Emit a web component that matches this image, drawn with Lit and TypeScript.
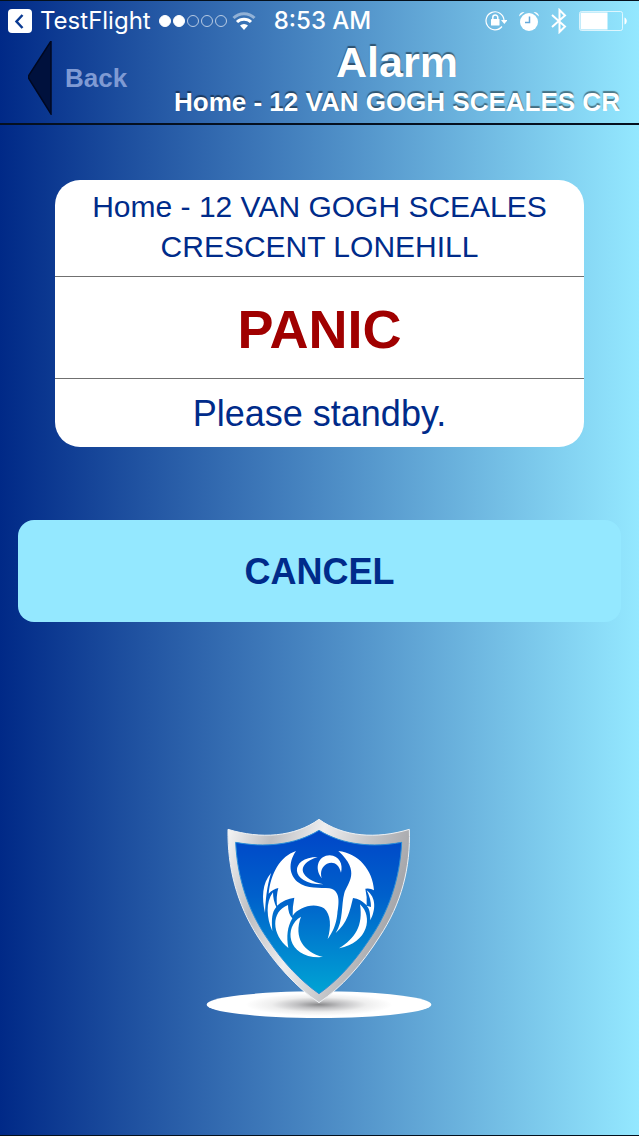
import { LitElement, html, css, svg } from "lit";
import { customElement, property, state } from "lit/decorators.js";
import { classMap } from "lit/directives/class-map.js";

// ─── Status bar ──────────────────────────────────────────────────────────────
// Carrier signal, wifi, clock and the indicator icons on the right.
@customElement("status-bar")
class StatusBar extends LitElement {
  @property() app = "";
  @property() time = "";
  @property({ type: Number }) signal = 0;

  static styles = css`
    :host {
      display: flex;
      align-items: center;
      height: 40px;
      padding: 0 12px 0 8px;
      color: #fff;
      font-family: Inter, "Liberation Sans", sans-serif;
      font-size: 24px;
      line-height: 40px;
      white-space: nowrap;
    }

    svg {
      display: block;
      flex: none;
    }

    .return {
      display: flex;
      align-items: center;
      gap: 8px;
      color: inherit;
      text-decoration: none;
    }

    .signal {
      display: flex;
      gap: 2px;
      margin: 0 5px 0 8px;
    }

    .dot {
      box-sizing: border-box;
      width: 12px;
      height: 12px;
      border: 1px solid rgba(255, 255, 255, 0.65);
      border-radius: 50%;
    }

    .dot.on {
      background: #fff;
      border-color: #fff;
    }

    .time {
      margin-left: 18px;
      font-weight: 500;
    }

    .indicators {
      display: flex;
      align-items: center;
      gap: 12px;
      margin-left: auto;
    }
  `;

  render() {
    return html`
      <a class="return" href="#">
        <svg width="24" height="24" viewBox="0 0 24 24" aria-hidden="true">
          <rect width="24" height="24" rx="4" fill="#fff" />
          <path d="M14.500 6 8.500 12.500 14.500 19" fill="none" stroke="#0a3a92" stroke-width="2.500" />
        </svg>
        ${this.app}
      </a>
      <span class="signal">
        ${[1, 2, 3, 4, 5].map(
          (n) => html`<i class=${classMap({ dot: true, on: n <= this.signal })}></i>`
        )}
      </span>
      <svg width="24" height="18" viewBox="0 0 24 18" fill="none" stroke="#fff" stroke-width="3">
        <path d="M1.500 6a15 15 0 0 1 21 0" opacity="0.45" />
        <path d="M5 10a10 10 0 0 1 14 0" />
        <path d="M8 13.500a5.800 5.800 0 0 1 8 0L12 18z" fill="#fff" stroke="none" />
      </svg>
      <span class="time">${this.time}</span>
      <span class="indicators">
        <svg width="22" height="22" viewBox="0 0 22 22" fill="none" stroke="#fff">
          <path d="M17 16.500A9 9 0 1 1 19 10" stroke-width="1.200" />
          <path d="M16 10h6.500l-3.200 4z" fill="#fff" stroke="none" />
          <rect x="6" y="9" width="8.500" height="6.500" rx="0.500" fill="#fff" stroke="none" />
          <path d="M7.800 10V7.500a2.500 2.500 0 0 1 5 0V10" stroke-width="1.500" />
        </svg>
        <svg width="20" height="20" viewBox="0 0 20 20" fill="#fff">
          <circle cx="10" cy="11" r="9" />
          <path d="M0 5.500a5 5 0 0 1 5.500-4.500z M20 5.500a5 5 0 0 0-5.500-4.500z" />
          <path d="M10.500 5.500v6H6" fill="none" stroke="#64a8da" stroke-width="1.500" />
        </svg>
        <svg width="16" height="26" viewBox="0 0 16 26" fill="none" stroke="#fff" stroke-width="2">
          <path d="M1 7 14 18.500 8.500 24V2l5.500 5.500L1 19" />
        </svg>
        <svg width="48" height="20" viewBox="0 0 48 20">
          <rect x="0.500" y="0.500" width="43" height="19" rx="2" fill="none" stroke="#fff" opacity="0.7" />
          <rect x="1.500" y="1.500" width="27" height="17" fill="#fff" />
          <path d="M45.500 6.500c3 1 3 6 0 7z" fill="#fff" />
        </svg>
      </span>
    `;
  }
}

// ─── Navigation bar ──────────────────────────────────────────────────────────
// The subtitle is clipped on the right when the address is too long.
@customElement("nav-bar")
class NavBar extends LitElement {
  @property() heading = "";
  @property() subtitle = "";

  static styles = css`
    :host {
      display: flex;
      height: 82px;
      padding: 0 19px 0 28px;
      border-bottom: 2px solid #05101f;
    }

    .back {
      display: flex;
      flex: none;
      align-items: center;
      gap: 13px;
      width: 146px;
      height: 74px;
      padding: 0;
      border: 0;
      background: none;
      color: #7f9ad3;
      font: bold 26px "Liberation Sans", sans-serif;
    }

    .titles {
      flex: 1;
      min-width: 0;
      color: #fff;
      text-align: center;
      text-shadow: 0 -2px 1px rgba(0, 0, 0, 0.45);
    }

    h1 {
      margin: 0;
      font-size: 43px;
      line-height: 42px;
    }

    p {
      margin: 0;
      padding-top: 2px;
      overflow: hidden;
      font-size: 26px;
      font-weight: bold;
      line-height: 34px;
      text-align: left;
      white-space: nowrap;
    }
  `;

  render() {
    return html`
      <button class="back" type="button">
        <svg width="24" height="74" viewBox="0 0 24 74" aria-hidden="true">
          <path d="M23 0v73L1 38q-1-2 0-4z" fill="#00113d" stroke="#000820" stroke-width="1.500" />
        </svg>
        Back
      </button>
      <div class="titles">
        <h1>${this.heading}</h1>
        <p>${this.subtitle}</p>
      </div>
    `;
  }
}

// ─── Shield logo ─────────────────────────────────────────────────────────────
const BIRD = [
  // body and left wing
  "M288 122C262 160 270 195 292 214C322 238 360 230 388 234C424 240 416 282 412 310C408 345 398 365 383 386C394 350 393 312 372 294C340 275 296 292 278 316Q277 290 283 262Q255 265 231 286Q228 258 235 233Q219 236 206 250C212 190 240 138 288 122Z",
  // left feathers
  "M213 188C186 220 185 262 195 308C197 268 200 232 213 188Z",
  "M219 246C196 275 200 325 217 362C214 325 216 305 229 290Q219 270 219 246Z",
  "M264 284C212 304 214 372 265 413C259 378 262 350 277 324Q264 310 264 284Z",
  "M303 319C248 350 262 448 369 440C310 424 280 382 303 319Z",
  // neck and head
  "M353 140C267 140 268 224 370 222C304 208 280 164 353 140Z",
  "M365 204C340 170 358 135 389 135C418 136 430 162 423 187C415 157 398 153 381 160C365 170 360 184 365 204Z",
  // right wing
  "M415 122C475 128 519 180 522 240Q510 232 496 235Q502 260 500 285Q482 266 459 263C450 300 443 337 407 368C431 330 423 285 433 248C442 218 484 185 415 122Z",
  "M500 240C530 262 527 300 511 330C510 305 509 296 500 286L513 290Q513 265 500 240Z",
  "M480 282C520 318 505 398 417 414C465 385 490 347 480 282Z",
];

@customElement("shield-logo")
class ShieldLogo extends LitElement {
  static styles = css`
    :host,
    svg {
      display: block;
    }
  `;

  render() {
    return html`
      <svg width="228" height="203" viewBox="18 20 684 609" role="img" aria-label="Shield">
        <defs>
          <linearGradient id="rim" x1="0" y1="0" x2="1" y2="0.3">
            <stop offset="0" stop-color="#f8f8f8" />
            <stop offset="0.25" stop-color="#bdbec2" />
            <stop offset="0.5" stop-color="#eeeeef" />
            <stop offset="0.75" stop-color="#c4c5c8" />
            <stop offset="1" stop-color="#a3a4a8" />
          </linearGradient>
          <linearGradient id="face" x1="0" y1="0" x2="0" y2="1">
            <stop offset="0" stop-color="#0046c8" />
            <stop offset="0.4" stop-color="#0060cb" />
            <stop offset="1" stop-color="#00a4d4" />
          </linearGradient>
          <radialGradient id="shade">
            <stop offset="0" stop-color="#8a8a8c" />
            <stop offset="0.3" stop-color="#c0c0c2" />
            <stop offset="0.65" stop-color="#eeeeee" />
            <stop offset="1" stop-color="#ffffff" />
          </radialGradient>
        </defs>
        <ellipse cx="357" cy="583" rx="337" ry="40" fill="#fff" />
        <ellipse cx="357" cy="583" rx="220" ry="34" fill="url(#shade)" />
        <path
          d="M357 27C430 80 530 87 628 57C632 170 605 280 538 380C486 462 426 530 357 577C288 530 226 462 174 380C110 280 82 170 84 57C182 87 284 80 357 27Z"
          fill="url(#rim)"
          stroke="#eef1f4"
          stroke-width="3"
        />
        <path
          d="M357 60C430 105 520 112 605 96C600 205 566 307 505 392C462 456 414 510 357 550C300 510 250 456 207 392C146 307 112 205 107 96C192 112 284 105 357 60Z"
          fill="url(#face)"
          stroke="#2a8fd8"
          stroke-width="3"
        />
        ${BIRD.map((d) => svg`<path d=${d} fill="#fff" />`)}
      </svg>
    `;
  }
}

// ─── Alarm screen ────────────────────────────────────────────────────────────
@customElement("app-root")
class AppRoot extends LitElement {
  @state() private address = "Home - 12 VAN GOGH SCEALES CRESCENT LONEHILL";
  @state() private alarm = "PANIC";
  @state() private message = "Please standby.";

  static styles = css`
    :host {
      box-sizing: border-box;
      display: flex;
      flex-direction: column;
      min-height: 100vh;
      border: solid #04101c;
      border-width: 1px 0;
      background: linear-gradient(to right, #002987, #94e8ff);
      color: #002b8a;
      font-family: "Liberation Sans", Arial, sans-serif;
    }

    main {
      display: flex;
      flex: 1;
      flex-direction: column;
      padding: 55px 18px 115px;
    }

    .card {
      margin: 0 37px;
      border-radius: 25px;
      background: #fff;
      text-align: center;
    }

    .card > * {
      margin: 0;
    }

    .card > * + * {
      border-top: 1px solid #707070;
    }

    .address {
      padding: 7px 32px 9px;
      font-size: 30px;
      line-height: 40px;
    }

    .alarm {
      padding-top: 3px;
      color: #a00000;
      font-size: 54px;
      line-height: 98px;
    }

    .message {
      padding-top: 2px;
      font-size: 36px;
      line-height: 66px;
    }

    .cancel {
      height: 102px;
      margin-top: 73px;
      padding: 2px 0 0;
      border: 0;
      border-radius: 16px;
      background: #94e8ff;
      color: inherit;
      font: bold 36px "Liberation Sans", Arial, sans-serif;
    }

    shield-logo {
      align-self: center;
      margin-top: auto;
    }
  `;

  render() {
    return html`
      <status-bar app="TestFlight" time="8:53 AM" signal="2"></status-bar>
      <nav-bar heading="Alarm" subtitle=${this.address}></nav-bar>
      <main>
        <section class="card">
          <p class="address">${this.address}</p>
          <h2 class="alarm">${this.alarm}</h2>
          <p class="message">${this.message}</p>
        </section>
        <button class="cancel" type="button">CANCEL</button>
        <shield-logo></shield-logo>
      </main>
    `;
  }
}
